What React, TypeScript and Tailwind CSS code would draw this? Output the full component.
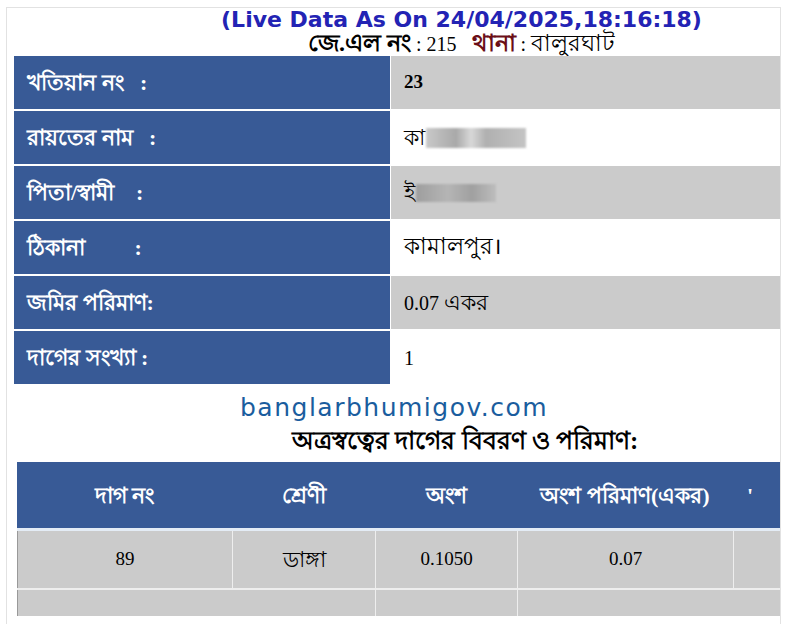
import * as React from 'react';

const rows: { label: string; value: React.ReactNode; gray: boolean }[] = [
  { label: 'খতিয়ান নং   :', value: <span className="font-bold text-[19px]">23</span>, gray: true },
  {
    label: 'রায়তের নাম   :',
    value: (
      <span className="flex items-center text-[22px]">
        কা<span className="ml-[1px] inline-block h-[20px] w-[100px] bg-[linear-gradient(90deg,#c9c9c9_0%,#a9a9a9_30%,#d8d8d8_45%,#b0b0b0_60%,#c4c4c4_100%)] blur-[1px]" />
      </span>
    ),
    gray: false,
  },
  {
    label: 'পিতা/স্বামী    :',
    value: (
      <span className="flex items-center text-[22px]">
        ই<span className="ml-[1px] inline-block h-[18px] w-[80px] bg-[linear-gradient(90deg,#9e9e9e_0%,#b5b5b5_40%,#a0a0a0_70%,#bdbdbd_100%)] blur-[1px]" />
      </span>
    ),
    gray: true,
  },
  { label: 'ঠিকানা         :', value: <span className="text-[23px]">কামালপুর।</span>, gray: false },
  {
    label: 'জমির পরিমাণ:',
    value: (
      <span>
        0.07 <span className="text-[22px]">একর</span>
      </span>
    ),
    gray: true,
  },
  { label: 'দাগের সংখ্যা :', value: '1', gray: false },
];

const bengali = "font-['Liberation_Serif','Noto_Sans',serif]";

export default function App() {
  return (
    <div className="h-[624px] w-[787px] overflow-hidden bg-white">
      <div className="mx-[6px] mt-[7px] h-[640px] overflow-hidden border border-[#e2e2e2] bg-white">
        {/* heading */}
        <div className="pl-[136px] text-center leading-none">
          <div className="pt-[1px] font-['DejaVu_Sans',sans-serif] text-[22px] font-bold text-[#2323b4]">
            (Live Data As On 24/04/2025,18:16:18)
          </div>
          <div className={`text-[20px] text-black ${bengali}`}>
            <span className="text-[24px] font-bold">জে.এল নং</span> : 215 &nbsp;{' '}
            <span className="text-[24px] font-bold text-[#6b0e17]">থানা</span> : <span className="text-[23px]">বালুরঘাট</span>
          </div>
        </div>

        {/* info table */}
        <div className="ml-[7px] mt-[1px] grid w-[766px] grid-cols-[376px_389px] gap-x-[1px] gap-y-[2px] bg-white">
          {rows.map((r) => (
            <React.Fragment key={r.label}>
              <div className={`flex h-[53px] items-center whitespace-pre bg-[#385a96] pl-[13px] text-[22px] font-bold text-white ${bengali}`}>
                {r.label}
              </div>
              <div
                className={`flex h-[53px] items-center pl-[13px] text-[20px] text-black ${bengali} ${r.gray ? 'bg-[#cbcbcb]' : 'bg-white'}`}
              >
                {r.value}
              </div>
            </React.Fragment>
          ))}
        </div>

        {/* site + title */}
        <div className="mt-[9px] pl-[233px] font-['DejaVu_Sans',sans-serif] text-[25px] leading-[30px] tracking-[1.5px] text-[#1a5d9e]">
          banglarbhumigov.com
        </div>
        <div className={`mt-[3px] pl-[285px] text-[25px] font-bold leading-[30px] text-black ${bengali}`}>
          অত্রস্বত্বের দাগের বিবরণ ও পরিমাণ:
        </div>

        {/* plot table */}
        <div className="ml-[10px] mt-[6px] w-[800px]">
          <div className={`grid h-[66px] grid-cols-[215px_143px_142px_216px_84px] items-center bg-[#385a96] text-center text-[22px] font-bold text-white ${bengali}`}>
            <div>দাগ নং</div>
            <div>শ্রেণী</div>
            <div>অংশ</div>
            <div>অংশ পরিমাণ(একর)</div>
            <div className="text-left pl-[14px]">'</div>
          </div>
          <div className="h-[3px] bg-[#e4ecf5]" />
          <div className={`grid h-[57px] grid-cols-[215px_143px_142px_216px_84px] text-center text-[19px] text-black ${bengali}`}>
            <div className="flex items-center justify-center border-l border-[#999] bg-[#cbcbcb]">89</div>
            <div className="flex items-center justify-center border-l border-[#eee] bg-[#cbcbcb] text-[22px]">ডাঙ্গা</div>
            <div className="flex items-center justify-center border-l border-[#eee] bg-[#cbcbcb]">0.1050</div>
            <div className="flex items-center justify-center border-l border-[#eee] bg-[#cbcbcb]">0.07</div>
            <div className="border-l border-[#eee] bg-[#cbcbcb]" />
          </div>
          <div className="grid h-[28px] grid-cols-[358px_142px_300px] border-t-2 border-[#eee]">
            <div className="border-l border-[#999] bg-[#cbcbcb]" />
            <div className="border-l border-[#eee] bg-[#cbcbcb]" />
            <div className="border-l border-[#eee] bg-[#cbcbcb]" />
          </div>
        </div>
      </div>
    </div>
  );
}
